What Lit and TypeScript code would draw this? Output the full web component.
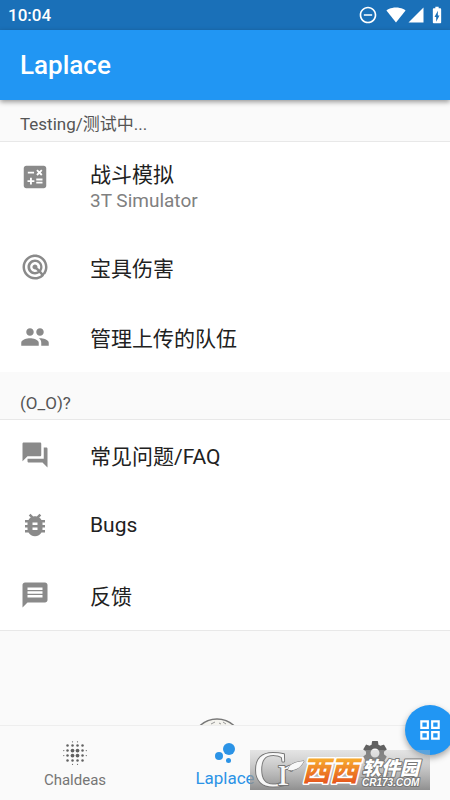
import { LitElement, html, css, svg } from "lit";
import { customElement, property } from "lit/decorators.js";

const icons: Record<string, unknown> = {
  calculate: svg`<path fill-rule="evenodd" d="M19 3H5c-1.100 0-2 .9-2 2v14c0 1.100.9 2 2 2h14c1.100 0 2-.9 2-2V5c0-1.100-.9-2-2-2zm-5.970 4.060L14.090 6l1.410 1.410L16.910 6l1.060 1.060-1.410 1.410 1.410 1.410-1.060 1.060-1.410-1.400-1.410 1.410-1.060-1.060 1.410-1.410-1.410-1.420zm-6.780.66h5v1.500h-5v-1.500zM11.500 16h-2v2H8v-2H6v-1.500h2v-2h1.500v2h2V16zm6.500 1.250h-5v-1.500h5v1.500zm0-2.500h-5v-1.500h5v1.500z"/>`,
  radar: svg`<path d="M19.740 18.330C21.150 16.600 22 14.400 22 12c0-5.520-4.480-10-10-10S2 6.480 2 12s4.480 10 10 10c2.400 0 4.600-.85 6.330-2.260.27-.22.530-.46.780-.71.030-.3.050-.6.070-.8.200-.2.390-.41.560-.62zM12 20c-4.410 0-8-3.590-8-8s3.590-8 8-8 8 3.590 8 8c0 1.850-.63 3.540-1.690 4.900l-1.430-1.430c.69-.98 1.100-2.170 1.100-3.460 0-3.310-2.690-6-6-6s-6 2.690-6 6 2.690 6 6 6c1.300 0 2.510-.42 3.490-1.130l1.420 1.420C15.540 19.370 13.850 20 12 20zm1.920-7.490c.17-.66.020-1.380-.49-1.900l-.02-.02c-.77-.77-2-.78-2.780-.04-.01.010-.03.020-.05.040-.78.780-.78 2.050 0 2.830l.2.020c.52.510 1.250.67 1.910.49l1.510 1.510c-.6.360-1.290.58-2.040.58-2.210 0-4-1.790-4-4s1.790-4 4-4 4 1.790 4 4c0 .73-.21 1.410-.56 2l-1.500-1.510z"/>`,
  people: svg`<path d="M16 11c1.660 0 2.990-1.340 2.990-3S17.660 5 16 5s-3 1.340-3 3 1.340 3 3 3zm-8 0c1.660 0 2.990-1.340 2.990-3S9.660 5 8 5 5 6.340 5 8s1.340 3 3 3zm0 2c-2.330 0-7 1.170-7 3.500V19h14v-2.500c0-2.330-4.670-3.500-7-3.500zm8 0c-.29 0-.62.020-.97.050 1.160.84 1.970 1.970 1.970 3.450V19h6v-2.500c0-2.330-4.670-3.500-7-3.500z"/>`,
  forum: svg`<path d="M21 6h-2v9H6v2c0 .55.450 1 1 1h11l4 4V7c0-.55-.45-1-1-1zm-4 6V3c0-.55-.45-1-1-1H3c-.55 0-1 .45-1 1v14l4-4h10c.55 0 1-.45 1-1z"/>`,
  bug: svg`<path d="M20 8h-2.810c-.45-.78-1.070-1.450-1.820-1.960L17 4.410 15.590 3l-2.170 2.170C12.960 5.060 12.490 5 12 5s-.96.060-1.410.170L8.410 3 7 4.410l1.620 1.630C7.880 6.550 7.260 7.220 6.810 8H4v2h2.090c-.05.330-.09.660-.09 1v1H4v2h2v1c0 .34.040.67.090 1H4v2h2.810c1.040 1.790 2.970 3 5.190 3s4.150-1.210 5.190-3H20v-2h-2.090c.05-.33.090-.66.090-1v-1h2v-2h-2v-1c0-.34-.04-.67-.09-1H20V8zm-6 8h-4v-2h4v2zm0-4h-4v-2h4v2z"/>`,
  message: svg`<path d="M20 2H4c-1.100 0-1.990.9-1.990 2L2 22l4-4h14c1.100 0 2-.9 2-2V4c0-1.100-.9-2-2-2zm-2 12H6v-2h12v2zm0-3H6V9h12v2zm0-3H6V6h12v2z"/>`,
  blur: [6, 10, 14, 18].flatMap((x) => [6, 10, 14, 18].map((y) => {
    const inner = x > 6 && x < 18 && y > 6 && y < 18;
    return svg`<circle cx=${x} cy=${y} r=${inner ? 1.5 : 1}/>`;
  })).concat([10, 14].map((p) => svg`
    <circle cx=${p} cy="3" r=".5"/><circle cx=${p} cy="21" r=".5"/>
    <circle cx="3" cy=${p} r=".5"/><circle cx="21" cy=${p} r=".5"/>`)),
  bubbles: svg`<circle cx="7.200" cy="14.400" r="3.200"/><circle cx="14.800" cy="18" r="2"/><circle cx="15.200" cy="8.800" r="4.800"/>`,
  settings: svg`<path d="M19.140 12.940c.04-.3.060-.61.060-.94 0-.32-.02-.64-.07-.94l2.030-1.580c.18-.14.230-.41.120-.61l-1.920-3.320c-.12-.22-.37-.29-.59-.22l-2.390.96c-.5-.38-1.030-.7-1.620-.94l-.36-2.540c-.04-.24-.24-.41-.48-.41h-3.840c-.24 0-.43.170-.47.410l-.36 2.540c-.59.240-1.130.57-1.620.94l-2.390-.96c-.22-.08-.47 0-.59.220L2.740 8.870c-.12.210-.08.470.12.610l2.030 1.580c-.05.300-.09.630-.09.940s.02.640.07.940l-2.030 1.580c-.18.140-.23.410-.12.610l1.920 3.320c.12.220.37.290.59.220l2.390-.96c.5.380 1.030.7 1.620.94l.36 2.540c.05.240.24.410.48.410h3.840c.24 0 .44-.17.470-.41l.36-2.540c.59-.24 1.130-.56 1.620-.94l2.390.96c.22.080.47 0 .59-.22l1.920-3.320c.12-.22.070-.47-.12-.61l-2.010-1.580zM12 15.600c-1.980 0-3.600-1.620-3.600-3.600s1.620-3.600 3.600-3.600 3.600 1.620 3.600 3.600-1.620 3.600-3.600 3.600z"/>`,
  grid: svg`<path fill-rule="evenodd" d="M3 3v8h8V3H3zm6 6H5V5h4v4zm-6 4v8h8v-8H3zm6 6H5v-4h4v4zm4-16v8h8V3h-8zm6 6h-4V5h4v4zm-6 4v8h8v-8h-8zm6 6h-4v-4h4v4z"/>`,
  dnd: svg`<path d="M7 11v2h10v-2H7zm5-9C6.480 2 2 6.480 2 12s4.480 10 10 10 10-4.480 10-10S17.520 2 12 2zm0 18c-4.410 0-8-3.590-8-8s3.590-8 8-8 8 3.590 8 8-3.590 8-8 8z"/>`,
  wifi: svg`<path d="M12 21 23.500 6.500C23 6 18.500 3 12 3S1 6 .5 6.500z"/>`,
  signal: svg`<path d="M2 22h20V2z"/>`,
  battery: svg`<path fill-rule="evenodd" d="M15.670 4H14V2h-4v2H8.330C7.600 4 7 4.600 7 5.330v15.330C7 21.400 7.600 22 8.330 22h7.330c.74 0 1.340-.6 1.340-1.330V5.330C17 4.600 16.400 4 15.670 4zM11 20v-5.500H9L13 7v5.500h2L11 20z"/>`,
};

@customElement("ui-icon")
class UiIcon extends LitElement {
  @property() name = "";
  static styles = css`
    :host { display: block; flex: none; width: 30px; height: 30px; }
    svg { display: block; width: 100%; height: 100%; fill: currentColor; }
  `;
  render() {
    return html`<svg viewBox="0 0 24 24" aria-hidden="true">${icons[this.name]}</svg>`;
  }
}

interface Item { icon: string; title: string; sub?: string }
const groups: { heading: string; items: Item[] }[] = [
  {
    heading: "Testing/测试中...",
    items: [
      { icon: "calculate", title: "战斗模拟", sub: "3T Simulator" },
      { icon: "radar", title: "宝具伤害" },
      { icon: "people", title: "管理上传的队伍" },
    ],
  },
  {
    heading: "(O_O)?",
    items: [
      { icon: "forum", title: "常见问题/FAQ" },
      { icon: "bug", title: "Bugs" },
      { icon: "message", title: "反馈" },
    ],
  },
];

@customElement("app-root")
class AppRoot extends LitElement {
  static styles = css`
    :host {
      display: flex; flex-direction: column; position: relative; min-height: 100vh;
      overflow: hidden; background: #fafafa; color: #212121;
      font-family: Roboto, "Noto Sans CJK SC", sans-serif;
    }
    * { box-sizing: border-box; }
    button { font: inherit; border: 0; padding: 0; background: none; cursor: pointer; }
    .status {
      display: flex; align-items: center; height: 30px; padding: 0 3px 0 8px;
      background: #1a70b8; color: #fff; font-size: 17px; font-weight: 500;
    }
    .time { flex: 1; }
    .tray { display: flex; align-items: center; }
    .tray ui-icon { width: 20px; height: 20px; }
    .tray .dnd { margin-right: 8px; }
    .tray .signal { width: 18px; height: 18px; margin: 0 2px 0 1px; }
    .bar {
      display: flex; align-items: center; height: 70px; padding: 0 20px; z-index: 1;
      background: #2196f3; color: #fff; box-shadow: 0 2px 5px rgba(0, 0, 0, .4);
    }
    h1 { margin: 0; font-size: 26px; font-weight: 500; }
    main { flex: 1; display: flex; flex-direction: column; }
    h2 {
      margin: 0; padding: 0 20px 4px; height: 48px; display: flex; align-items: flex-end;
      font-size: 17px; line-height: 24px; font-weight: 400; color: #555;
      border-bottom: 1px solid #e8e8e8;
    }
    section:first-child h2 { height: 42px; padding-bottom: 5px; }
    .list { list-style: none; margin: 0; padding: 0; background: #fff; }
    section:last-of-type .list { border-bottom: 1px solid #e8e8e8; }
    .row {
      display: flex; align-items: center; gap: 40px; width: 100%; height: 70px;
      padding: 0 20px; text-align: left; color: #212121;
    }
    .row ui-icon { color: #8a8a8a; }
    .row.two { height: 90px; align-items: flex-start; padding-top: 16px; }
    .row.two ui-icon { margin-top: 4px; }
    .text { display: flex; flex-direction: column; }
    .title { font-size: 21px; }
    .sub { font-size: 19px; line-height: 26px; color: #808080; }
    .foot { flex: 1; display: flex; align-items: flex-end; justify-content: center; overflow: hidden; }
    .emblem { display: block; width: 56px; height: 7px; margin-right: 16px; }
    nav {
      display: flex; height: 75px; background: #fafafa; border-top: 1px solid #eee;
    }
    .tab {
      flex: 1; display: flex; flex-direction: column; align-items: center; justify-content: flex-end;
      padding: 0 0 10px; font-size: 15px; line-height: 20px; color: #757575;
    }
    .tab ui-icon { margin-bottom: 2px; color: #616161; }
    .tab.on, .tab.on ui-icon { color: #2b93e6; }
    .tab.on { font-size: 17px; line-height: 24px; }
    .tab.on ui-icon { margin-bottom: -2px; }
    .fab {
      position: absolute; right: -5px; bottom: 45px; width: 50px; height: 50px;
      display: grid; place-items: center; border-radius: 50%; background: #2196f3; color: #fff;
      box-shadow: 0 3px 6px rgba(0, 0, 0, .35);
    }
    .fab ui-icon { width: 26px; height: 26px; }
    .mark {
      position: absolute; right: 20px; bottom: 10px; width: 180px; height: 40px;
      pointer-events: none; overflow: visible; paint-order: stroke; stroke-linejoin: round;
    }
    .mark text { paint-order: stroke; }
    .serif { font-family: "Liberation Serif", serif; fill: #f8f8f8; stroke: #777; stroke-width: 2px; }
    .big { font-size: 50px; }
    .small { font-size: 42px; }
    .cjk { font-family: "Noto Sans CJK SC", sans-serif; font-weight: 900; font-style: italic; }
    .orange { font-size: 28px; fill: url(#fire); stroke: #fff; stroke-width: 3px; }
    .white { font-size: 19px; fill: #fff; stroke: #777; stroke-width: 2px; }
    .url {
      font: italic bold 10px "Liberation Sans", sans-serif; fill: #fff; stroke: #777; stroke-width: 2px;
    }
  `;

  row(item: Item) {
    return html`<li><button class="row ${item.sub ? "two" : ""}">
      <ui-icon name=${item.icon}></ui-icon>
      <span class="text"><span class="title">${item.title}</span>
        ${item.sub ? html`<span class="sub">${item.sub}</span>` : ""}</span>
    </button></li>`;
  }

  render() {
    return html`
      <div class="status"><span class="time">10:04</span>
        <span class="tray">
          <ui-icon class="dnd" name="dnd"></ui-icon><ui-icon name="wifi"></ui-icon>
          <ui-icon class="signal" name="signal"></ui-icon><ui-icon name="battery"></ui-icon>
        </span>
      </div>
      <header class="bar"><h1>Laplace</h1></header>
      <main>
        ${groups.map((g) => html`<section><h2>${g.heading}</h2>
          <ul class="list">${g.items.map((i) => this.row(i))}</ul></section>`)}
        <div class="foot">
          <svg class="emblem" viewBox="0 0 56 7" aria-hidden="true">
            <circle cx="28" cy="26" r="25" fill="#f4f3ee" stroke="#777" stroke-width="1.500"/>
            <path d="M22 6l4-2M30 5l2 1M34 4l3 2" fill="none" stroke="#999"/>
          </svg>
        </div>
      </main>
      <nav>
        <button class="tab"><ui-icon name="blur"></ui-icon>Chaldeas</button>
        <button class="tab on"><ui-icon name="bubbles"></ui-icon>Laplace</button>
        <button class="tab"><ui-icon name="settings"></ui-icon>设置</button>
      </nav>
      <button class="fab" aria-label="Apps"><ui-icon name="grid"></ui-icon></button>
      <svg class="mark" viewBox="0 0 180 40">
        <defs>
          <linearGradient id="shade" x2="0" y2="1">
            <stop offset="0" stop-color="#bbb" stop-opacity=".35"/>
            <stop offset="1" stop-color="#868686" stop-opacity=".92"/>
          </linearGradient>
          <linearGradient id="fire" x2="0" y2="1">
            <stop offset=".2" stop-color="#f8b030"/><stop offset=".9" stop-color="#e4501c"/>
          </linearGradient>
        </defs>
        <rect width="180" height="40" fill="url(#shade)"/>
        <text class="serif big" x="4" y="36">C</text>
        <text class="serif small" x="28" y="35">r</text>
        <path d="M38 20c1-6 7-8 16-9-3 6-8 10-15 9z" fill="#f8f8f8" stroke="#777"/>
        <text class="cjk orange" x="52" y="31">西西</text>
        <text class="cjk white" x="112" y="25">软件园</text>
        <text class="url" x="112" y="36">CR173.COM</text>
      </svg>
    `;
  }
}
